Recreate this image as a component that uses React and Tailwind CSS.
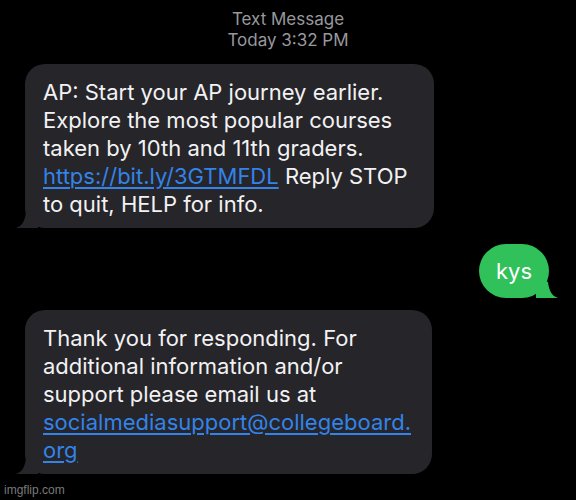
import React from 'react';

const font = { fontFamily: 'Inter, "Noto Sans", sans-serif' };

const TailLeft = ({ color }) => (
  <svg className="absolute -left-[9px] bottom-0" width="22" height="20" viewBox="0 0 22 20">
    <path d="M22 0 L22 20 L0 20 C6 18 9 13 10 4 Z" fill={color} />
  </svg>
);

const TailRight = ({ color }) => (
  <svg className="absolute -right-[9px] bottom-0" width="22" height="20" viewBox="0 0 22 20">
    <path d="M0 0 L0 20 L22 20 C16 18 13 13 12 4 Z" fill={color} />
  </svg>
);

const Incoming = ({ className = '', children }) => (
  <div className={`relative bg-[#262529] rounded-[20px] pl-[18px] pr-3 pt-[14px] pb-[10px] text-[22px] leading-[28px] text-[#f2f2f4] ${className}`}>
    {children}
    <TailLeft color="#262529" />
  </div>
);

const Link = ({ children }) => (
  <span className="text-[#3383e8] underline underline-offset-[3px] decoration-[1.5px]">{children}</span>
);

const App = () => {
  return (
    <div className="w-[576px] h-[500px] bg-black flex flex-col relative overflow-hidden" style={font}>
      <div className="flex flex-col items-center pt-[9px] text-[17px] leading-[21px] text-[#98989d]">
        <div>Text Message</div>
        <div>Today 3:32 PM</div>
      </div>

      <Incoming className="ml-[25px] mt-[13px] w-[409px]">
        <div>AP: Start your AP journey earlier.</div>
        <div>Explore the most popular courses</div>
        <div>taken by 10th and 11th graders.</div>
        <div>
          <Link>https://bit.ly/3GTMFDL</Link> Reply STOP
        </div>
        <div>to quit, HELP for info.</div>
      </Incoming>

      <div className="self-end mr-[27px] mt-[16px] relative bg-[#30c15a] rounded-[27px] h-[54px] w-[70px] flex items-center justify-center text-[22px] text-white">
        kys
        <TailRight color="#30c15a" />
      </div>

      <Incoming className="ml-[25px] mt-[12px] w-[407px]">
        <div>Thank you for responding. For</div>
        <div>additional information and/or</div>
        <div>support please email us at</div>
        <div>
          <Link>socialmediasupport@collegeboard.</Link>
        </div>
        <div>
          <Link>org</Link>
        </div>
      </Incoming>

      <div className="absolute left-[4px] bottom-[1px] text-[12px] text-[#7a7a7a]" style={{ fontFamily: '"Liberation Sans", Arial, sans-serif' }}>
        imgflip.com
      </div>
    </div>
  );
};

export default App;
